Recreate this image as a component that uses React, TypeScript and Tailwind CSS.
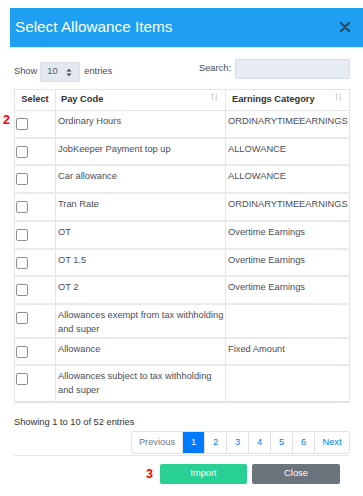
import React from 'react';

const rows = [
  { code: ['Ordinary Hours'], cat: 'ORDINARYTIMEEARNINGS', h: 'h-[28px]' },
  { code: ['JobKeeper Payment top up'], cat: 'ALLOWANCE', h: 'h-[27px]' },
  { code: ['Car allowance'], cat: 'ALLOWANCE', h: 'h-[28px]' },
  { code: ['Tran Rate'], cat: 'ORDINARYTIMEEARNINGS', h: 'h-[28px]' },
  { code: ['OT'], cat: 'Overtime Earnings', h: 'h-[28px]' },
  { code: ['OT 1.5'], cat: 'Overtime Earnings', h: 'h-[27px]' },
  { code: ['OT 2'], cat: 'Overtime Earnings', h: 'h-[28px]' },
  { code: ['Allowances exempt from tax withholding', 'and super'], cat: '', h: 'h-[34px]' },
  { code: ['Allowance'], cat: 'Fixed Amount', h: 'h-[27px]' },
  { code: ['Allowances subject to tax withholding', 'and super'], cat: '', h: 'h-[35px]' },
];

const SortIcon = () => (
  <svg width="7" height="8" viewBox="0 0 7 8" className="mt-[-6px]">
    <path d="M1.5 7.5V0.8M0.2 2.2L1.5 0.8L2.8 2.2" stroke="#c9cdd2" strokeWidth="0.9" fill="none" />
    <path d="M5.3 0.5V7.2M4 5.8L5.3 7.2L6.6 5.8" stroke="#c9cdd2" strokeWidth="0.9" fill="none" />
  </svg>
);

export default function App() {
  const pages = ['1', '2', '3', '4', '5', '6'];
  return (
    <div className="relative h-[496px] w-[363px] overflow-hidden bg-white font-['Liberation_Sans',Arial,sans-serif] text-[9.3px] text-[#4a4d57]">
      <div className="ml-[10px] mt-[8px]">
        <div className="flex h-[40px] items-center justify-between border-b border-[#d6e8f5] bg-[#1e9ff2] pb-[2px] pl-[5px] pr-[13px]">
          <h2 className="text-[15.3px] leading-none text-white">Select Allowance Items</h2>
          <svg width="10" height="10" viewBox="0 0 10 10">
            <path d="M1 1L9 9M9 1L1 9" stroke="#1f4d70" strokeWidth="2.4" strokeLinecap="round" />
          </svg>
        </div>

        <div className="pl-[4px] pr-[13px]">
          <div className="mt-[11px] flex h-[23px] items-start justify-between">
            <div className="flex items-center pt-[3px]">
              <span>Show</span>
              <div className="ml-[3px] flex h-[20px] w-[40px] items-center justify-between rounded-[2px] border border-[#d9e0e8] bg-[#e4e9ef] pl-[6px] pr-[7px]">
                <span className="text-[#555]">10</span>
                <svg width="6" height="9" viewBox="0 0 6 9">
                  <path d="M0.5 3.5L3 0.8L5.5 3.5Z M0.5 5.5L3 8.2L5.5 5.5Z" fill="#444" />
                </svg>
              </div>
              <span className="ml-[4px]">entries</span>
            </div>
            <div className="flex items-center">
              <span className="mr-[4px]">Search:</span>
              <div className="h-[20px] w-[115px] rounded-[2px] border border-[#d5dde6] bg-[#e7ecf2]" />
            </div>
          </div>

          <div className="mt-[7px] w-[336px] border border-b-2 border-[#e1e5ea]">
            <div className="grid h-[21px] grid-cols-[41px_170px_123px] border-b border-[#e1e5ea] font-bold text-[#333]">
              <div className="flex items-center justify-center border-r border-[#e1e5ea]">Select</div>
              <div className="flex items-center justify-between border-r border-[#e1e5ea] pl-[5px] pr-[7px]">
                <span>Pay Code</span>
                <SortIcon />
              </div>
              <div className="flex items-center justify-between pl-[6px] pr-[7px]">
                <span>Earnings Category</span>
                <SortIcon />
              </div>
            </div>
            {rows.map((r, i) => (
              <div
                key={i}
                className={`grid grid-cols-[41px_170px_123px] ${r.h} ${i < rows.length - 1 ? 'border-b-2' : ''} border-[#e8ebef]`}
              >
                <div className="border-r border-[#e1e5ea] pl-[1px] pt-[7px]">
                  <div className="h-[12px] w-[12px] rounded-[2px] border border-[#8c9196] bg-white" />
                </div>
                <div className="border-r border-[#e1e5ea] pl-[2px] pt-[3px] leading-[14px]">
                  {r.code.map((c, j) => (
                    <div key={j}>{c}</div>
                  ))}
                </div>
                <div className="pl-[2px] pt-[3px] leading-[14px]">{r.cat}</div>
              </div>
            ))}
          </div>

          <div className="mt-[12px] leading-[14px] text-[#333]">Showing 1 to 10 of 52 entries</div>

          <div className="mt-[2px] flex justify-end">
            <div className="flex h-[23px] overflow-hidden rounded-[3px] border border-[#dee2e6]">
              <div className="flex w-[51px] items-center justify-center border-r border-[#dee2e6] text-[#6c757d]">Previous</div>
              {pages.map((p) => (
                <div
                  key={p}
                  className={`flex w-[22px] items-center justify-center border-r border-[#dee2e6] ${
                    p === '1' ? 'bg-[#007bff] text-white' : 'text-[#007bff]'
                  }`}
                >
                  {p}
                </div>
              ))}
              <div className="flex w-[34px] items-center justify-center text-[#007bff]">Next</div>
            </div>
          </div>

          <div className="mt-[1px] border-t border-[#e4e7eb]" />

          <div className="mt-[8px] flex items-center justify-end pr-[10px]">
            <span className="mr-[7px] text-[12.6px] font-bold leading-none text-[#f00]">3</span>
            <button className="h-[20px] w-[87px] rounded-[2px] bg-[#28d094] text-white">Import</button>
            <button className="ml-[5px] h-[20px] w-[88px] rounded-[2px] bg-[#6b737c] text-white">Close</button>
          </div>
        </div>
      </div>

      <span className="absolute left-[3px] top-[114px] text-[12.6px] font-bold leading-none text-[#f00]">2</span>
    </div>
  );
}
